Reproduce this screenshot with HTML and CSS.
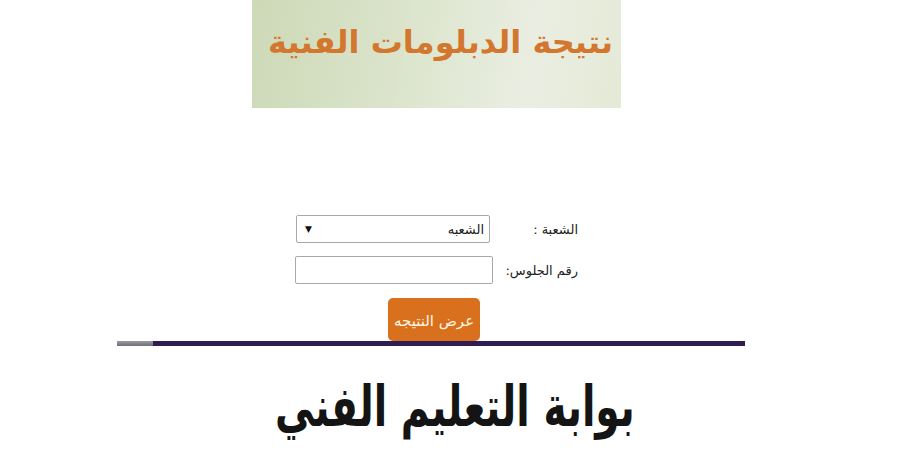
FILE: index.html
```html
<!DOCTYPE html>
<html lang="ar">
<head>
<meta charset="utf-8">
<link rel="stylesheet" href="styles.css">
</head>
<body>
<div class="page">
  <div class="banner"><span class="banner-title">نتيجة الدبلومات الفنية</span></div>
  <form class="form" dir="rtl">
    <div class="row">
      <label class="lbl lbl-1">الشعبة :</label>
      <div class="select"><span>الشعبه</span><span class="arrow">▼</span></div>
    </div>
    <div class="row">
      <label class="lbl">رقم الجلوس:</label>
      <div class="input"></div>
    </div>
  </form>
  <div class="btn-wrap"><button class="btn" type="button">عرض النتيجه</button></div>
  <div class="rule"><span class="rule-gray"></span><span class="rule-purple"></span></div>
  <h1 class="portal"><span class="portal-text">بوابة التعليم الفني</span></h1>
</div>
</body>
</html>
```
FILE: styles.css
```css
html, body {
  margin: 0;
  padding: 0;
  background: #ffffff;
  overflow: hidden;
}
.page {
  width: 900px;
  height: 450px;
  overflow: hidden;
  font-family: "DejaVu Sans", sans-serif;
}
.banner {
  margin-left: 252px;
  width: 369px;
  height: 108px;
  background: linear-gradient(100deg, #cdd9b7 0%, #dbe4cb 40%, #eaeee2 75%, #e4ead6 100%);
  display: flex;
  justify-content: flex-end;
  align-items: flex-start;
  box-sizing: border-box;
  padding: 22px 8px 0 0;
}
.banner-title {
  color: #d3772e;
  font-weight: bold;
  font-size: 32px;
  line-height: 40px;
  direction: rtl;
}
.form {
  margin: 107px 0 0 0;
  width: 578px;
  display: flex;
  flex-direction: column;
  gap: 13px;
}
.row {
  display: flex;
  align-items: center;
  height: 28px;
}
.lbl {
  width: 85px;
  font-size: 13px;
  color: #222;
  text-align: right;
}
.lbl-1 { width: 88px; }
.select {
  width: 194px;
  height: 28px;
  box-sizing: border-box;
  border: 1px solid #a9a9a9;
  border-radius: 2px;
  display: flex;
  justify-content: space-between;
  align-items: center;
  padding: 0 5px 0 8px;
  font-size: 13px;
  color: #222;
}
.arrow { font-size: 9px; color: #111; }
.input {
  width: 198px;
  height: 28px;
  box-sizing: border-box;
  border: 1px solid #a9a9a9;
  border-radius: 2px;
}
.btn-wrap {
  margin: 14px 0 0 388px;
}
.btn {
  width: 92px;
  height: 43px;
  border: none;
  border-radius: 5px;
  background: #d9701e;
  color: #fff6e0;
  font-family: "DejaVu Sans", sans-serif;
  font-size: 15px;
  padding: 2px 0 0 0;
  display: block;
}
.rule {
  margin: 0 0 0 117px;
  width: 628px;
  height: 5px;
  display: flex;
}
.rule-gray { width: 36px; background: linear-gradient(#9a9aa0, #6f6f78); }
.rule-purple { flex: 1; background: #2f1c52; }
.portal {
  margin: 26px 0 0 0;
  width: 900px;
  padding-left: 10px;
  box-sizing: border-box;
  text-align: center;
  font-size: 56px;
  line-height: 70px;
  font-weight: bold;
  color: #141414;
  direction: rtl;
}
.portal-text {
  display: inline-block;
  transform: scaleX(0.7);
}
```
